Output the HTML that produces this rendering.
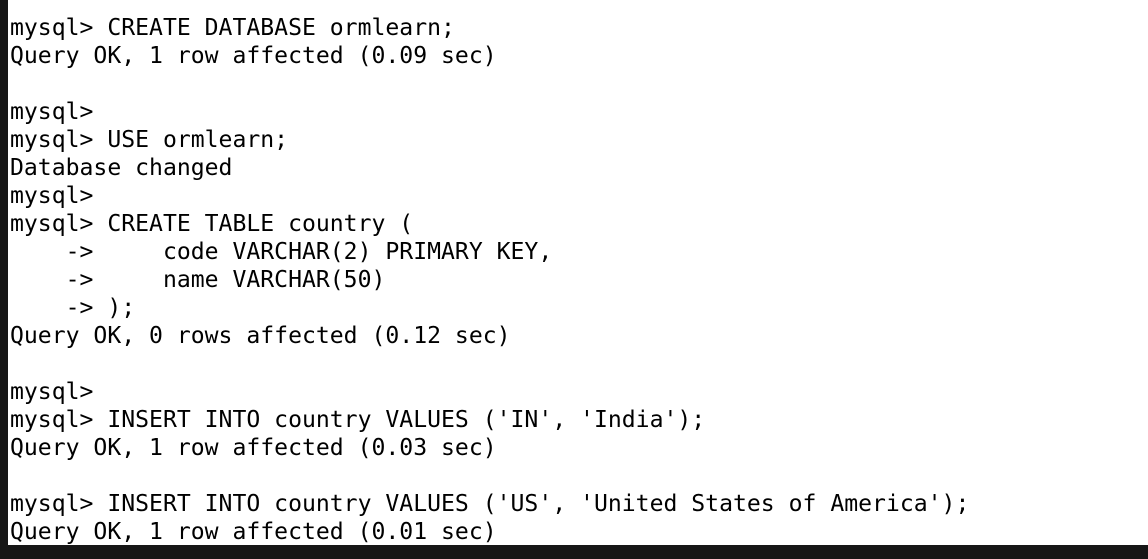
<!DOCTYPE html>
<html><head><style>
html,body{margin:0;padding:0;}
body{width:1148px;height:559px;background:#fff;position:relative;overflow:hidden;}
.l{position:absolute;left:0;top:0;width:8px;height:559px;background:#161616;}
.b{position:absolute;left:0;top:545px;width:1148px;height:14px;background:#161616;}
pre{position:absolute;left:10px;top:14px;margin:0;font-family:"DejaVu Sans Mono","Liberation Mono",monospace;font-size:23.1px;line-height:28px;color:#000;}
</style></head><body>
<div class="l"></div><div class="b"></div>
<pre>mysql&gt; CREATE DATABASE ormlearn;
Query OK, 1 row affected (0.09 sec)

mysql&gt;
mysql&gt; USE ormlearn;
Database changed
mysql&gt;
mysql&gt; CREATE TABLE country (
    -&gt;     code VARCHAR(2) PRIMARY KEY,
    -&gt;     name VARCHAR(50)
    -&gt; );
Query OK, 0 rows affected (0.12 sec)

mysql&gt;
mysql&gt; INSERT INTO country VALUES ('IN', 'India');
Query OK, 1 row affected (0.03 sec)

mysql&gt; INSERT INTO country VALUES ('US', 'United States of America');
Query OK, 1 row affected (0.01 sec)</pre>
</body></html>
